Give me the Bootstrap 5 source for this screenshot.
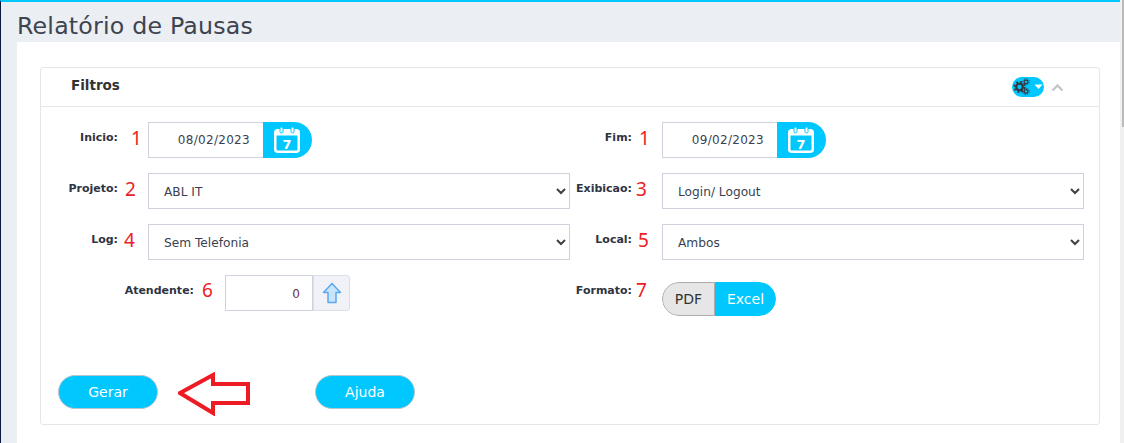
<!DOCTYPE html>
<html lang="pt">
<head>
<meta charset="utf-8">
<title>Relatório de Pausas</title>
<link href="https://cdn.jsdelivr.net/npm/bootstrap@5.3.0/dist/css/bootstrap.min.css" rel="stylesheet">
<style>
html,body{height:443px;overflow:hidden}
body{background:#ebeef2;font-family:"DejaVu Sans",Verdana,sans-serif;color:#3a3f51;border-top:2px solid #00c8ff;border-left:1px solid #0b1a3c;width:1124px}
.pg-title{font-size:23.7px;font-weight:400;line-height:30px;margin:0;padding:9px 0 0 16px;height:40px;color:#3d4450;letter-spacing:.2px}
.pg-wrap{padding-left:16px;padding-right:4px}
.pg-panel{background:#fff;height:401px;padding:25px 20px 0 23px}
.scroll-track{position:absolute;top:0;right:0;width:4px;height:443px;background:#f0f0f0}
.scroll-thumb{width:2px;height:127px;background:#bbb;margin-left:2px}
.filt-card{border:1px solid #e4e6ea;border-radius:3px;height:358px;background:#fff}
.filt-head{height:39px;border-bottom:1px solid #e4e6ea;padding:0 35px 0 30px}
.filt-head h2{font-size:13.5px;font-weight:700;margin:0;color:#333;line-height:34px;height:34px}
.head-tools{gap:7px}
.gear-pill{width:32px;height:20px;border-radius:10px;background:#00c8ff;display:block;line-height:0}
.filt-body{padding:15px 0 0 0;height:317px}
.frm-row{height:36px;margin-bottom:15px}
.lab-l{width:107px;flex:none}
.lab-r{width:92px;flex:none}
.lab-a{width:184px;flex:none}
.lab-txt{font-size:11px;font-weight:700;color:#2f3442;text-align:right;white-space:nowrap;line-height:14px;margin-top:-5px}
.lab-l .lab-txt{width:77px}
.lab-r .lab-txt{width:62px}
.lab-a .lab-txt{width:153px}
.lab-num{font-family:"Noto Sans",sans-serif;color:#ed1c24;font-size:19px;line-height:24px;margin-top:-4px}
.m-a{margin-left:13px}.m-b{margin-left:7px}.m-c{margin-left:6px}.m-d{margin-left:8px}
.m-e{margin-left:4px}.m-f{margin-left:6px}.m-g{margin-left:7px}
.row-low .lab-num{margin-top:-6px}
.sel-box{height:36px;width:422px;flex:none;border:1px solid #cfd2dc;border-radius:0;font-size:12.2px;color:#3a3f51;padding:2px 30px 0 15px;background-image:url("data:image/svg+xml,%3csvg xmlns='http://www.w3.org/2000/svg' viewBox='0 0 10 7'%3e%3cpath fill='none' stroke='%23404040' stroke-width='2' d='M1 1l4 4 4-4'/%3e%3c/svg%3e");background-position:right 3px center;background-size:10px 7px;font-family:"DejaVu Sans",sans-serif}
.sel-box:focus{box-shadow:none;border-color:#cfd2dc}
.date-inp{width:115px;height:36px;border:1px solid #cfd2dc;border-right:0;font-size:12px;text-align:right;padding:0 13px 0 0;color:#3a3f51;line-height:35px;letter-spacing:.3px}
.date-btn{width:49px;height:36px;background:#00c8ff;border-radius:0 18px 18px 0;border:0;padding:0 0 0 8px}
.num-inp{width:88px;height:36px;border:1px solid #cfd2dc;font-size:12px;text-align:right;padding:0 12px 0 0;line-height:36px;color:#6a3040}
.up-btn{width:37px;height:36px;border:1px solid #dcdfe6;background:#f0f2f7;border-radius:0 3px 3px 0;padding:0}
.fmt-grp{height:34px;border-radius:17px;overflow:hidden;font-family:"DejaVu Sans",sans-serif;margin-top:7px}
.fmt-pdf{width:53px;background:#e6e6e6;border:1px solid #adadad;border-radius:17px 0 0 17px;color:#333;font-size:14px}
.fmt-xls{width:61px;background:#00c8ff;color:#fff;border-radius:0 17px 17px 0;font-size:14px}
.act-row{margin-top:57px;padding-left:17px}
.pill-btn{width:100px;height:34px;background:#00c8ff;border:1px solid #b8c4cc;border-radius:17px;color:#fff;font-size:14px;padding:0;font-family:"DejaVu Sans",sans-serif}
.pill-btn:hover{background:#00c8ff;color:#fff}
.arrow-box{margin-left:20px;margin-right:65px;width:72px;height:44px;flex:none;margin-top:4px}
</style>
</head>
<body>
<h1 class="pg-title">Relatório de Pausas</h1>
<div class="pg-wrap">
  <div class="pg-panel">
    <div class="filt-card">
      <div class="filt-head d-flex align-items-center justify-content-between">
        <h2 class="align-self-start">Filtros</h2>
        <div class="head-tools d-flex align-items-center">
          <span class="gear-pill">
            <svg width="32" height="20" viewBox="0 0 32 20">
              <g fill="none" stroke="#33373f">
                <circle cx="7.500" cy="10" r="3.300" stroke-width="2.300"/>
                <circle cx="7.500" cy="10" r="5.300" stroke-width="1.600" stroke-dasharray="2 2.160"/>
                <circle cx="14" cy="5" r="1.800" stroke-width="1.300"/>
                <circle cx="14" cy="5" r="3.200" stroke-width="1" stroke-dasharray="1.300 1.200"/>
                <circle cx="14" cy="14.500" r="1.800" stroke-width="1.300"/>
                <circle cx="14" cy="14.500" r="3.200" stroke-width="1" stroke-dasharray="1.300 1.200"/>
              </g>
              <path d="M22.500 7.500h8l-4 4.500z" fill="#fff"/>
            </svg>
          </span>
          <svg width="13" height="9" viewBox="0 0 13 9"><path d="M1.500 7.500 6.500 2.500l5 5" fill="none" stroke="#c4c6c9" stroke-width="2.400"/></svg>
        </div>
      </div>
      <div class="filt-body">
        <div class="frm-row d-flex">
          <div class="lab-l d-flex align-items-center"><span class="lab-txt">Inicio:</span><span class="lab-num m-a">1</span></div>
          <div class="d-flex" style="width:422px">
            <div class="date-inp">08/02/2023</div>
            <button type="button" class="date-btn d-flex align-items-center justify-content-start">
              <svg width="32" height="28" viewBox="0 0 32 28">
                <rect x="4.250" y="4.250" width="23.500" height="21.500" rx="2.500" fill="none" stroke="#fff" stroke-width="2.500"/>
                <rect x="4" y="4" width="24" height="5.500" fill="#fff"/>
                <rect x="9" y="1" width="3" height="6" rx="1.500" fill="#fff" stroke="#00c8ff"/>
                <rect x="20" y="1" width="3" height="6" rx="1.500" fill="#fff" stroke="#00c8ff"/>
                <text x="16" y="22.500" text-anchor="middle" font-family="DejaVu Sans" font-weight="700" font-size="13" fill="#fff">7</text>
              </svg>
            </button>
          </div>
          <div class="lab-r d-flex align-items-center"><span class="lab-txt">Fim:</span><span class="lab-num m-g">1</span></div>
          <div class="d-flex">
            <div class="date-inp">09/02/2023</div>
            <button type="button" class="date-btn d-flex align-items-center justify-content-start">
              <svg width="32" height="28" viewBox="0 0 32 28">
                <rect x="4.250" y="4.250" width="23.500" height="21.500" rx="2.500" fill="none" stroke="#fff" stroke-width="2.500"/>
                <rect x="4" y="4" width="24" height="5.500" fill="#fff"/>
                <rect x="9" y="1" width="3" height="6" rx="1.500" fill="#fff" stroke="#00c8ff"/>
                <rect x="20" y="1" width="3" height="6" rx="1.500" fill="#fff" stroke="#00c8ff"/>
                <text x="16" y="22.500" text-anchor="middle" font-family="DejaVu Sans" font-weight="700" font-size="13" fill="#fff">7</text>
              </svg>
            </button>
          </div>
        </div>
        <div class="frm-row d-flex">
          <div class="lab-l d-flex align-items-center"><span class="lab-txt">Projeto:</span><span class="lab-num m-b">2</span></div>
          <select class="form-select sel-box"><option>ABL IT</option></select>
          <div class="lab-r d-flex align-items-center"><span class="lab-txt">Exibicao:</span><span class="lab-num m-e">3</span></div>
          <select class="form-select sel-box"><option>Login/ Logout</option></select>
        </div>
        <div class="frm-row d-flex">
          <div class="lab-l d-flex align-items-center"><span class="lab-txt">Log:</span><span class="lab-num m-c">4</span></div>
          <select class="form-select sel-box"><option>Sem Telefonia</option></select>
          <div class="lab-r d-flex align-items-center"><span class="lab-txt">Local:</span><span class="lab-num m-f">5</span></div>
          <select class="form-select sel-box"><option>Ambos</option></select>
        </div>
        <div class="frm-row row-low d-flex">
          <div class="lab-a d-flex align-items-center"><span class="lab-txt">Atendente:</span><span class="lab-num m-d">6</span></div>
          <div class="d-flex" style="width:345px">
            <div class="num-inp">0</div>
            <button type="button" class="up-btn d-flex align-items-center justify-content-center">
              <svg width="20" height="22" viewBox="0 0 20 22"><path d="M10 1.500 18.500 10.500H14V20.500H6V10.500H1.500z" fill="#c8e4fb" stroke="#5aa9ee" stroke-width="1.500" stroke-linejoin="round"/></svg>
            </button>
          </div>
          <div class="lab-r d-flex align-items-center"><span class="lab-txt">Formato:</span><span class="lab-num m-e">7</span></div>
          <div class="fmt-grp d-flex">
            <div class="fmt-pdf d-flex align-items-center justify-content-center">PDF</div>
            <div class="fmt-xls d-flex align-items-center justify-content-center">Excel</div>
          </div>
        </div>
        <div class="act-row d-flex align-items-center">
          <button type="button" class="btn pill-btn">Gerar</button>
          <svg class="arrow-box" viewBox="0 0 72 44"><path d="M2 21 35 3V12H70V31H35V41Z" fill="none" stroke="#ed1c24" stroke-width="4"/></svg>
          <button type="button" class="btn pill-btn">Ajuda</button>
        </div>
      </div>
    </div>
  </div>
</div>
<div class="scroll-track"><div class="scroll-thumb"></div></div>
</body>
</html>
